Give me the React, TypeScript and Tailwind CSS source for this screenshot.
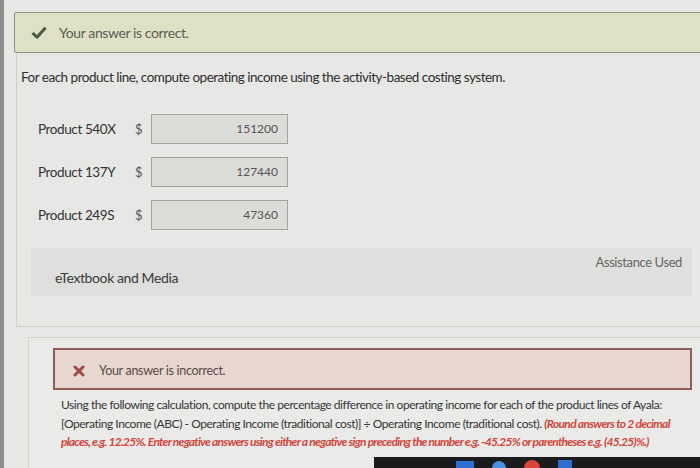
import React from 'react';

const rows = [
  { label: 'Product 540X', value: '151200' },
  { label: 'Product 137Y', value: '127440' },
  { label: 'Product 249S', value: '47360' },
];

function CheckMark() {
  return (
    <svg width="16" height="13" viewBox="0 0 16 13" className="shrink-0">
      <path d="M1.5 7 L6 11.2 L14.5 1.8" fill="none" stroke="#4b5a45" strokeWidth="3" strokeLinejoin="round" />
    </svg>
  );
}

function CrossMark() {
  return (
    <svg width="12" height="12" viewBox="0 0 12 12" className="shrink-0">
      <path d="M2 2 L10 10 M10 2 L2 10" stroke="#9a4b45" strokeWidth="3" strokeLinecap="round" />
    </svg>
  );
}

export default function App() {
  return (
    <div
      className="relative w-[700px] h-[468px] overflow-hidden bg-[#e7e7e5] border-l-4 border-[#8c8c8a] text-[#3a3a3a]"
      style={{ fontFamily: 'Lato, "Open Sans", sans-serif' }}
    >
      {/* result banner */}
      <div className="ml-[10px] mr-[-6px] mt-[12px] h-[41px] flex items-center gap-[12px] pl-[16px] bg-[#dee1c6] border border-[#8c8f84] rounded-[2px]">
        <CheckMark />
        <span className="text-[14px] text-[#5b5e55] tracking-[-0.4px]">Your answer is correct.</span>
      </div>

      {/* question panel */}
      <div className="ml-[12px] border-l border-b border-[#cfcfcc] pb-[30px]">
        <p className="pl-[4px] pt-[14px] text-[13.5px] text-[#2f2f2f] tracking-[-0.5px]">
          For each product line, compute operating income using the activity-based costing system.
        </p>

        <div className="mt-[27px] flex flex-col gap-[13px]">
          {rows.map((r) => (
            <div key={r.label} className="flex items-center">
              <span className="w-[118px] pl-[21px] text-[13.5px] text-[#333] tracking-[-0.4px]">{r.label}</span>
              <span className="w-[16px] text-[13px] text-[#555]">$</span>
              <div className="w-[137px] h-[30px] flex items-center justify-end pr-[9px] bg-[#dcdcd9] border border-[#a3a3a0] text-[12px] text-[#555]">
                {r.value}
              </div>
            </div>
          ))}
        </div>

        <div className="mt-[18px] ml-[14px] mr-[8px] h-[48px] flex justify-between bg-[#dfdfdd] rounded-[3px] pl-[24px] pr-[10px]">
          <span className="self-end pb-[8px] text-[14px] text-[#3a3a3a] tracking-[-0.4px]">eTextbook and Media</span>
          <span className="self-start pt-[5px] text-[13px] text-[#666] tracking-[-0.4px]">Assistance Used</span>
        </div>
      </div>

      {/* follow-up part */}
      <div className="mt-[10px] ml-[24px] border-l border-t border-[#d3d3d0] pt-[10px] bg-[#eaeae8] h-[140px]">
        <div className="ml-[24px] mr-[8px] h-[42px] flex items-center gap-[14px] pl-[18px] pt-[4px] bg-[#e6d7d1] border-2 border-[#8e5d57]">
          <CrossMark />
          <span className="text-[12.5px] text-[#5a4a47] tracking-[-0.3px]">Your answer is incorrect.</span>
        </div>
        <p className="ml-[32px] mt-[6px] text-[12px] leading-[18.5px] text-[#363636] tracking-[-0.45px] whitespace-nowrap">
          Using the following calculation, compute the percentage difference in operating income for each of the product lines of Ayala:
          <br />
          [Operating Income (ABC) - Operating Income (traditional cost)] ÷ Operating Income (traditional cost).{' '}
          <span className="italic font-bold text-[#d2463c] tracking-[-0.7px]">(Round answers to 2 decimal</span>
          <br />
          <span className="italic font-bold text-[#d2463c] tracking-[-0.75px]">
            places, e.g. 12.25%. Enter negative answers using either a negative sign preceding the number e.g. -45.25% or parentheses e.g. (45.25)%.)
          </span>
        </p>
      </div>

      {/* monitor bezel and taskbar along the bottom */}
      <div className="absolute left-[370px] right-0 bottom-0 h-[11px] bg-[#1b1b1d] flex items-end gap-[18px] pl-[82px]">
        <div className="w-[18px] h-[7px] bg-[#2f6fd1]" />
        <div className="w-[14px] h-[7px] bg-[#4a8ee0] rounded-t-full" />
        <div className="w-[16px] h-[8px] bg-[#d9463b] rounded-t-full" />
        <div className="w-[14px] h-[8px] bg-[#2d6fd0]" />
      </div>
    </div>
  );
}
